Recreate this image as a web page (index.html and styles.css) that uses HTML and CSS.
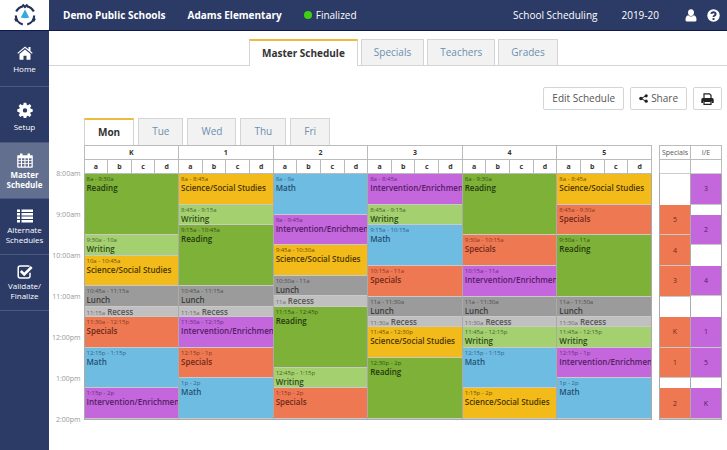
FILE: index.html
```html
<!DOCTYPE html>
<html lang="en">
<head>
<meta charset="utf-8">
<meta name="viewport" content="width=device-width, initial-scale=1">
<title>Master Schedule</title>
<link rel="stylesheet" href="styles.css">
</head>
<body>
<div class="app">
  <aside class="sidebar">
    <a class="logo" href="#" aria-label="Dashboard">
      <svg width="22" height="24" viewBox="0 0 22 24">
        <g fill="none" stroke="#24325c" stroke-width="2.200">
          <path d="M2.200 8.500A9.500 9.500 0 0 1 9 3.300M13 3.300a9.500 9.500 0 0 1 6.800 5.200M1.800 12.500a9.500 9.500 0 0 0 7 9M20.200 12.500a9.500 9.500 0 0 1-7 9"/>
          <path d="M8.500 1.500L11 4L13.500 1.500M1 15.500l1.800 2.800M21 15.500l-1.800 2.800"/>
        </g>
        <path d="M11 6.500L15.200 14.500Q11 16 6.800 14.500Z" fill="#35a9dd"/>
      </svg>
    </a>
    <nav class="menu">
      <a href="#"><svg width="16" height="14" viewBox="0 0 16 14"><path fill="#fff" d="M8 3.500L2.500 8v5.200q0 .6.600.6H6.500V9.800h3v4h3.400q.6 0 .6-.6V8zM8 .4L.3 6.900l.8.900L8 2l6.900 5.800.8-.9L13.500 5V1h-2v2.300z"/></svg><span>Home</span></a>
      <a href="#"><svg width="16" height="16" viewBox="0 0 16 16"><path fill="#fff" fill-rule="evenodd" d="M6.700.8h2.600l.4 2 1.200.5 1.700-1.200 1.800 1.800-1.200 1.700.5 1.200 2 .4v2.600l-2 .4-.5 1.200 1.200 1.700-1.800 1.800-1.700-1.200-1.200.5-.4 2H6.700l-.4-2-1.200-.5-1.700 1.200-1.800-1.800 1.200-1.700-.5-1.200-2-.4V7.200l2-.4.5-1.200-1.200-1.700 1.800-1.800 1.700 1.200 1.200-.5zM8 6.200a2.200 2.200 0 1 0 0 4.400a2.200 2.200 0 0 0 0-4.400z"/></svg><span>Setup</span></a>
      <a href="#" class="current"><svg width="16" height="15" viewBox="0 0 16 17" preserveAspectRatio="none"><path fill="#fff" fill-rule="evenodd" d="M1 2.500h2V.5h2.500v2h5v-2H13v2h2q.8 0 .8.800v12.500q0 .8-.8.800H1q-.8 0-.8-.8V3.300q0-.8.8-.8zM1.500 6v2.200h2.400V6zm3.500 0v2.200h2.400V6zm3.500 0v2.200h2.400V6zM12 6v2.200h2.500V6zM1.500 9.200v2.300h2.400V9.200zm3.500 0v2.300h2.400V9.200zm3.500 0v2.300h2.400V9.200zm3.500 0v2.300h2.500V9.200zM1.500 12.500v2.800h2.400v-2.800zm3.500 0v2.800h2.400v-2.800zm3.500 0v2.800h2.400v-2.800zm3.500 0v2.800h2.500v-2.800z"/></svg><span>Master<br>Schedule</span></a>
      <a href="#"><svg width="16" height="14" viewBox="0 0 16 14"><path fill="#fff" d="M0 .5h3v2.500H0zM4.500 .5H16v2.500H4.500zM0 4h3v2.500H0zM4.500 4H16v2.500H4.500zM0 7.500h3V10H0zM4.500 7.500H16V10H4.500zM0 11h3v2.500H0zM4.500 11H16v2.500H4.500z"/></svg><span>Alternate<br>Schedules</span></a>
      <a href="#"><svg width="16" height="14" viewBox="0 0 16 14"><path fill="none" stroke="#fff" stroke-width="1.500" d="M13 7.800V11q0 2-2 2H3.200q-2 0-2-2V3q0-2 2-2H11q1 0 1.500.4"/><path fill="none" stroke="#fff" stroke-width="2.600" d="M3.800 6l3.400 3.400L14.700 2"/></svg><span>Validate/<br>Finalize</span></a>
    </nav>
  </aside>

  <div class="page">
    <header class="topbar">
      <strong class="district">Demo Public Schools</strong>
      <strong class="school">Adams Elementary</strong>
      <span class="status"><i class="dot"></i>Finalized</span>
      <span class="product">School Scheduling</span>
      <span class="year">2019-20</span>
      <a href="#" aria-label="Account"><svg width="12" height="13" viewBox="0 0 12 13"><path fill="#fff" d="M6 .3c2 0 3 1.300 3 3.200S7.800 7 6 7 3 5.400 3 3.500 4 .3 6 .3zM3.200 6.300Q6 8.800 8.800 6.300Q11.500 6.800 11.500 11q0 1.500-1.500 1.500H2Q.5 12.500.5 11q0-4.200 2.700-4.700z"/></svg></a>
      <a href="#" aria-label="Help"><svg width="13" height="13" viewBox="0 0 13 13"><circle cx="6.500" cy="6.500" r="6.200" fill="#fff"/><path fill="none" stroke="#2c3b66" stroke-width="1.900" d="M4.300 4.900Q4.500 3.200 6.500 3.200T8.700 5Q8.700 6 7.500 6.500Q6.500 7 6.500 8.100M6.500 9v1.900"/></svg></a>
    </header>

    <nav class="tabs views">
      <a href="#" class="active">Master Schedule</a>
      <a href="#">Specials</a>
      <a href="#">Teachers</a>
      <a href="#">Grades</a>
    </nav>

    <main>
      <div class="actions">
        <button type="button">Edit Schedule</button>
        <button type="button"><svg width="9" height="9" viewBox="0 0 9 9"><path fill="none" stroke="#222" d="M7 1.800L2 4.500L7 7.200"/><g fill="#222"><circle cx="7.200" cy="1.800" r="1.600"/><circle cx="1.900" cy="4.500" r="1.700"/><circle cx="7.200" cy="7.200" r="1.600"/></g></svg>Share</button>
        <button type="button" class="print" aria-label="Print"><svg width="13" height="12" viewBox="0 0 13 12"><path fill="none" stroke="#222" stroke-width="1.200" d="M3 5.500V.8h5.500l1.500 1.500v3.200M3 8.500h7v2.800H3z"/><path fill="#222" fill-rule="evenodd" d="M1.800 5h9.400q1.500 0 1.500 1.500V10h-2V8H2.300v2h-2V6.500Q.3 5 1.800 5z"/></svg></button>
      </div>

      <nav class="tabs days">
        <a href="#" class="active">Mon</a>
        <a href="#">Tue</a>
        <a href="#">Wed</a>
        <a href="#">Thu</a>
        <a href="#">Fri</a>
      </nav>

      <table class="schedule">
        <colgroup><col class="c-time"><col span="24"><col class="c-gap"><col class="c-side" span="2"></colgroup>
        <thead>
          <tr>
            <td></td>
            <th colspan="4">K</th><th colspan="4">1</th><th colspan="4">2</th><th colspan="4">3</th><th colspan="4">4</th><th colspan="4">5</th>
            <td></td>
            <th class="side">Specials</th><th class="side">I/E</th>
          </tr>
          <tr>
            <td></td>
            <th>a</th><th>b</th><th>c</th><th>d</th>
            <th>a</th><th>b</th><th>c</th><th>d</th>
            <th>a</th><th>b</th><th>c</th><th>d</th>
            <th>a</th><th>b</th><th>c</th><th>d</th>
            <th>a</th><th>b</th><th>c</th><th>d</th>
            <th>a</th><th>b</th><th>c</th><th>d</th>
            <td></td>
            <th class="blank"></th><th class="blank"></th>
          </tr>
        </thead>
        <tbody>
          <tr>
            <td><div class="hours"><span>8:00am</span><span>9:00am</span><span>10:00am</span><span>11:00am</span><span>12:00pm</span><span>1:00pm</span><span>2:00pm</span></div></td>
            <td class="lane" colspan="4"><div class="slots">
              <div class="ev reading n6"><time>8a - 9:30a</time><b>Reading</b></div>
              <div class="ev writing n2"><time>9:30a - 10a</time><b>Writing</b></div>
              <div class="ev science n3"><time>10a - 10:45a</time><b>Science/Social Studies</b></div>
              <div class="ev lunch n2"><time>10:45a - 11:15a</time><b>Lunch</b></div>
              <div class="ev recess n1"><time>11:15a</time><b>Recess</b></div>
              <div class="ev specials n3"><time>11:30a - 12:15p</time><b>Specials</b></div>
              <div class="ev math n4"><time>12:15p - 1:15p</time><b>Math</b></div>
              <div class="ev enrich n3"><time>1:15p - 2p</time><b>Intervention/Enrichment</b></div>
            </div></td>
            <td class="lane" colspan="4"><div class="slots">
              <div class="ev science n3"><time>8a - 8:45a</time><b>Science/Social Studies</b></div>
              <div class="ev writing n2"><time>8:45a - 9:15a</time><b>Writing</b></div>
              <div class="ev reading n6"><time>9:15a - 10:45a</time><b>Reading</b></div>
              <div class="ev lunch n2"><time>10:45a - 11:15a</time><b>Lunch</b></div>
              <div class="ev recess n1"><time>11:15a</time><b>Recess</b></div>
              <div class="ev enrich n3"><time>11:30a - 12:15p</time><b>Intervention/Enrichment</b></div>
              <div class="ev specials n3"><time>12:15p - 1p</time><b>Specials</b></div>
              <div class="ev math n4"><time>1p - 2p</time><b>Math</b></div>
            </div></td>
            <td class="lane" colspan="4"><div class="slots">
              <div class="ev math n4"><time>8a - 9a</time><b>Math</b></div>
              <div class="ev enrich n3"><time>9a - 9:45a</time><b>Intervention/Enrichment</b></div>
              <div class="ev science n3"><time>9:45a - 10:30a</time><b>Science/Social Studies</b></div>
              <div class="ev lunch n2"><time>10:30a - 11a</time><b>Lunch</b></div>
              <div class="ev recess n1"><time>11a</time><b>Recess</b></div>
              <div class="ev reading n6"><time>11:15a - 12:45p</time><b>Reading</b></div>
              <div class="ev writing n2"><time>12:45p - 1:15p</time><b>Writing</b></div>
              <div class="ev specials n3"><time>1:15p - 2p</time><b>Specials</b></div>
            </div></td>
            <td class="lane" colspan="4"><div class="slots">
              <div class="ev enrich n3"><time>8a - 8:45a</time><b>Intervention/Enrichment</b></div>
              <div class="ev writing n2"><time>8:45a - 9:15a</time><b>Writing</b></div>
              <div class="ev math n4"><time>9:15a - 10:15a</time><b>Math</b></div>
              <div class="ev specials n3"><time>10:15a - 11a</time><b>Specials</b></div>
              <div class="ev lunch n2"><time>11a - 11:30a</time><b>Lunch</b></div>
              <div class="ev recess n1"><time>11:30a</time><b>Recess</b></div>
              <div class="ev science n3"><time>11:45a - 12:30p</time><b>Science/Social Studies</b></div>
              <div class="ev reading n6"><time>12:30p - 2p</time><b>Reading</b></div>
            </div></td>
            <td class="lane" colspan="4"><div class="slots">
              <div class="ev reading n6"><time>8a - 9:30a</time><b>Reading</b></div>
              <div class="ev specials n3"><time>9:30a - 10:15a</time><b>Specials</b></div>
              <div class="ev enrich n3"><time>10:15a - 11a</time><b>Intervention/Enrichment</b></div>
              <div class="ev lunch n2"><time>11a - 11:30a</time><b>Lunch</b></div>
              <div class="ev recess n1"><time>11:30a</time><b>Recess</b></div>
              <div class="ev writing n2"><time>11:45a - 12:15p</time><b>Writing</b></div>
              <div class="ev math n4"><time>12:15p - 1:15p</time><b>Math</b></div>
              <div class="ev science n3"><time>1:15p - 2p</time><b>Science/Social Studies</b></div>
            </div></td>
            <td class="lane" colspan="4"><div class="slots">
              <div class="ev science n3"><time>8a - 8:45a</time><b>Science/Social Studies</b></div>
              <div class="ev specials n3"><time>8:45a - 9:30a</time><b>Specials</b></div>
              <div class="ev reading n6"><time>9:30a - 11a</time><b>Reading</b></div>
              <div class="ev lunch n2"><time>11a - 11:30a</time><b>Lunch</b></div>
              <div class="ev recess n1"><time>11:30a</time><b>Recess</b></div>
              <div class="ev writing n2"><time>11:45a - 12:15p</time><b>Writing</b></div>
              <div class="ev enrich n3"><time>12:15p - 1p</time><b>Intervention/Enrichment</b></div>
              <div class="ev math n4"><time>1p - 2p</time><b>Math</b></div>
            </div></td>
            <td></td>
            <td class="lane"><div class="slots">
              <div class="n3"></div>
              <div class="cell specials n3">5</div>
              <div class="cell specials n3">4</div>
              <div class="cell specials n3">3</div>
              <div class="n2"></div>
              <div class="cell specials n3">K</div>
              <div class="cell specials n3">1</div>
              <div class="n1"></div>
              <div class="cell specials n3">2</div>
            </div></td>
            <td class="lane"><div class="slots">
              <div class="cell enrich n3">3</div>
              <div class="n1"></div>
              <div class="cell enrich n3">2</div>
              <div class="n2"></div>
              <div class="cell enrich n3">4</div>
              <div class="n2"></div>
              <div class="cell enrich n3">1</div>
              <div class="cell enrich n3">5</div>
              <div class="n1"></div>
              <div class="cell enrich n3">K</div>
            </div></td>
          </tr>
        </tbody>
      </table>
    </main>
  </div>
</div>
</body>
</html>
```

FILE: styles.css
```css
* { box-sizing: border-box; }
body {
  margin: 0;
  background: #fff;
  color: #444;
  font: 10px/13px "Open Sans", "Noto Sans", sans-serif;
}
a { color: inherit; text-decoration: none; }
svg { display: block; flex: none; }

.app { display: flex; min-height: 100vh; }

/* Sidebar */
.sidebar {
  flex: none;
  width: 49px;
  background: #2c3b66;
  color: #fff;
}
.logo {
  display: flex;
  align-items: center;
  justify-content: center;
  height: 31px;
  background: #fff;
  border-bottom: 1px solid #10194d;
}
.menu a {
  display: flex;
  flex-direction: column;
  align-items: center;
  gap: 2px;
  min-height: 56px;
  padding-top: 10px;
  border-bottom: 1px solid #4c5a80;
  font-size: 8px;
  line-height: 10px;
  text-align: center;
}
.menu a:nth-child(-n+2) { padding-top: 15px; gap: 4px; }
.menu .current { background: #626f8f; font-weight: 700; }

/* Top bar */
.page { flex: 1; min-width: 0; }
.topbar {
  display: flex;
  align-items: center;
  gap: 10px;
  height: 31px;
  padding: 0 7px 0 14px;
  background: #2c3b66;
  border-bottom: 1px solid #10194d;
  color: #fff;
}
.school { margin-left: 12px; }
.status { display: flex; align-items: center; gap: 4px; margin-left: 12px; }
.dot { width: 8px; height: 8px; border-radius: 50%; background: #3fd012; }
.product { margin-left: auto; }
.year { margin: 0 16px 0 14px; }

/* Tabs */
.tabs { display: flex; }
.tabs a {
  padding: 6px 13px;
  background: #f2f2f2;
  border: 1px solid #d5d5d5;
  border-bottom: 0;
  color: #6b8fb0;
}
.tabs .active {
  background: #fff;
  border-top: 2px solid #eebb3c;
  color: #333;
  font-weight: 700;
}
.views {
  gap: 3px;
  padding: 8px 0 0 200px;
  border-bottom: 1px solid #d5d5d5;
}
.views a { padding: 6px 12px; }
.views .active { margin-bottom: -1px; }
.days { gap: 4px; padding-left: 35px; }

main { padding: 21px 5px 20px 0; }

.actions { display: flex; justify-content: flex-end; gap: 6px; margin-bottom: 8px; }
.actions button {
  display: flex;
  align-items: center;
  gap: 3px;
  height: 23px;
  padding: 0 8px;
  background: #fff;
  border: 1px solid #d5d5d5;
  border-radius: 2px;
  color: #555;
  font: inherit;
}
.actions .print { padding: 0 7px; }

/* Schedule */
.schedule {
  width: 100%;
  table-layout: fixed;
  border-collapse: collapse;
}
.c-time { width: 35px; }
.c-gap { width: 8px; }
.c-side { width: 31px; }
.schedule th, .schedule td { padding: 0; vertical-align: top; }
.schedule th {
  height: 14px;
  border: 1px solid #bbb;
  color: #333;
  font-size: 7px;
  line-height: 13px;
  font-weight: 700;
}
.schedule .side { color: #555; font-weight: 400; }
.schedule .blank { border-bottom: 0; }
.schedule .lane { border: 1px solid #aaa; border-top-color: #ccc; }

.hours {
  display: flex;
  flex-direction: column;
  justify-content: space-between;
  height: 256px;
  margin: -5px 0;
  padding-right: 3px;
  color: #999;
  font-size: 7px;
  line-height: 10px;
  text-align: right;
}
.slots {
  display: grid;
  grid-template-rows: repeat(24, minmax(0, 1fr));
  height: 245px;
}
.n1 { grid-row: span 1; }
.n2 { grid-row: span 2; }
.n3 { grid-row: span 3; }
.n4 { grid-row: span 4; }
.n6 { grid-row: span 6; }

.ev, .cell {
  min-width: 0;
  overflow: hidden;
  border-bottom: 1px solid #c9c9c9;
}
.ev {
  padding: 1px 0 0 2px;
  font-size: 8px;
  line-height: 10px;
  white-space: nowrap;
}
.ev time { display: block; font-size: 6px; line-height: 8px; opacity: 0.8; }
.ev b { display: block; font-weight: 600; }
.ev.recess { padding-top: 0; line-height: 9px; }
.recess time, .recess b { display: inline; }
.recess b { margin-left: 2px; }
.cell {
  display: flex;
  align-items: center;
  justify-content: center;
  font-size: 7px;
}

.reading { background: #7eb138; color: #23390c; }
.writing { background: #a5d070; color: #2c4a17; }
.science { background: #f2bb19; color: #4b3500; }
.specials { background: #ee7851; color: #70281a; }
.math { background: #6fbce3; color: #1f4f70; }
.enrich { background: #c466dc; color: #551d68; }
.lunch { background: #9b9b9b; color: #3d3d3d; }
.recess { background: #c0c0c0; color: #555; }
```
